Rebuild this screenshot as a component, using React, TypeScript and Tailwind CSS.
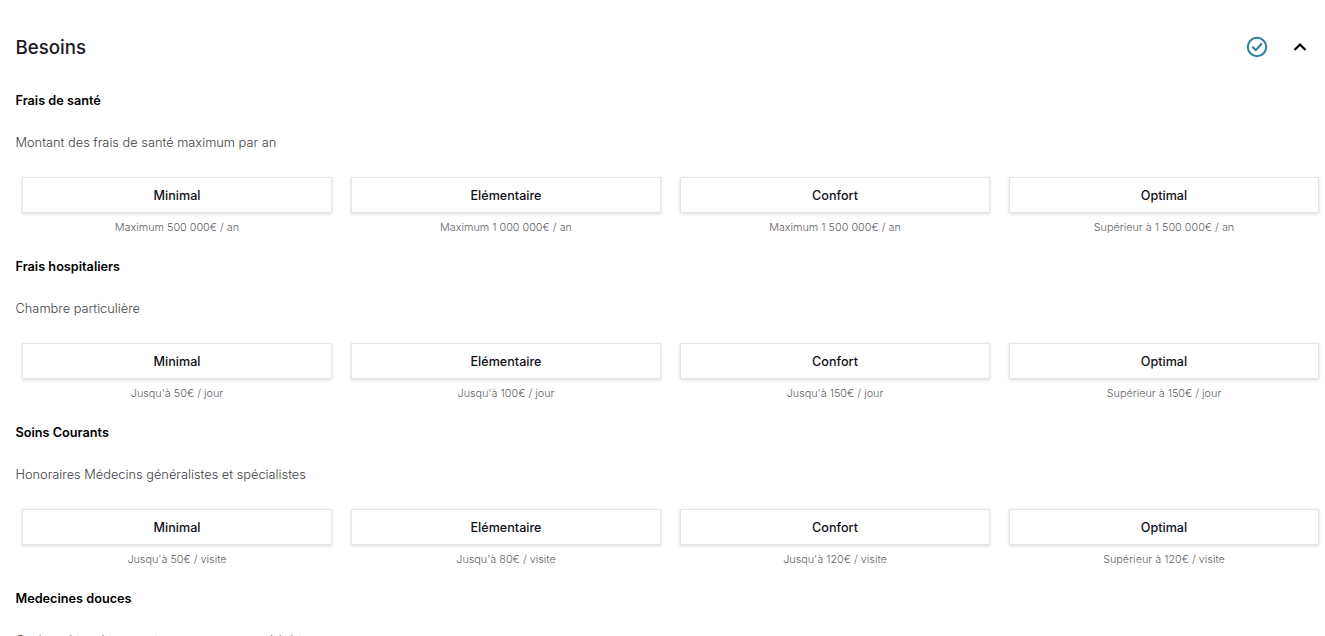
const sections = [
  { title: "Frais de santé", desc: "Montant des frais de santé maximum par an", caps: ["Maximum 500 000€ / an", "Maximum 1 000 000€ / an", "Maximum 1 500 000€ / an", "Supérieur à 1 500 000€ / an"] },
  { title: "Frais hospitaliers", desc: "Chambre particulière", caps: ["Jusqu'à 50€ / jour", "Jusqu'à 100€ / jour", "Jusqu'à 150€ / jour", "Supérieur à 150€ / jour"] },
  { title: "Soins Courants", desc: "Honoraires Médecins généralistes et spécialistes", caps: ["Jusqu'à 50€ / visite", "Jusqu'à 80€ / visite", "Jusqu'à 120€ / visite", "Supérieur à 120€ / visite"] },
];
const levels = ["Minimal", "Elémentaire", "Confort", "Optimal"];

export default function App() {
  return (
    <div className="h-[636px] overflow-hidden bg-white pl-[15.5px] pr-[6px] font-['Inter',sans-serif]">
      <div className="flex h-[93px] items-center justify-between pr-[12px]">
        <h1 className="mt-[3px] text-[18.7px] font-medium leading-none text-[#1a1a24]">Besoins</h1>
        <div className="flex items-center gap-[25px]">
          <svg width="22" height="22" viewBox="0 0 22 22" fill="none" stroke="#2a7da3" strokeWidth="2">
            <circle cx="11" cy="11" r="9.2" />
            <path d="M6.8 11.2 L9.8 14.2 L15.4 8" strokeLinecap="round" strokeLinejoin="round" />
          </svg>
          <svg width="14" height="10" viewBox="0 0 14 10" fill="none" stroke="#000" strokeWidth="2.2">
            <path d="M1.5 8 L7 2.5 L12.5 8" />
          </svg>
        </div>
      </div>
      {sections.map((s) => (
        <section key={s.title} className="h-[166px] pt-[1px]">
          <h2 className="h-[14px] text-[12.7px] font-semibold leading-[14px] text-black">{s.title}</h2>
          <p className="mt-[27px] h-[16px] text-[12.8px] font-light leading-[16px] text-[#3f3f46]">{s.desc}</p>
          <div className="mt-[26px] grid grid-cols-4 gap-[19px] pl-[6.5px]">
            {levels.map((l, i) => (
              <div key={l}>
                <button className="flex h-[36px] w-full items-center justify-center border border-[#e6e6e6] bg-white pt-[2px] text-[12.6px] font-[450] text-[#111118] shadow-[0_1px_3px_rgba(0,0,0,0.15)]">{l}</button>
                <p className="mt-[8px] text-center text-[10.8px] font-light leading-[14px] text-[#5f5f68]">{s.caps[i]}</p>
              </div>
            ))}
          </div>
        </section>
      ))}
      <section className="pt-[1px]">
        <h2 className="h-[14px] text-[12.7px] font-semibold leading-[14px] text-black">Medecines douces</h2>
        <p className="mt-[27px] text-[12.8px] font-light leading-[16px] text-[#3f3f46]">Ostéopathie, chiropractie, acupuncture et diététique</p>
      </section>
    </div>
  );
}
